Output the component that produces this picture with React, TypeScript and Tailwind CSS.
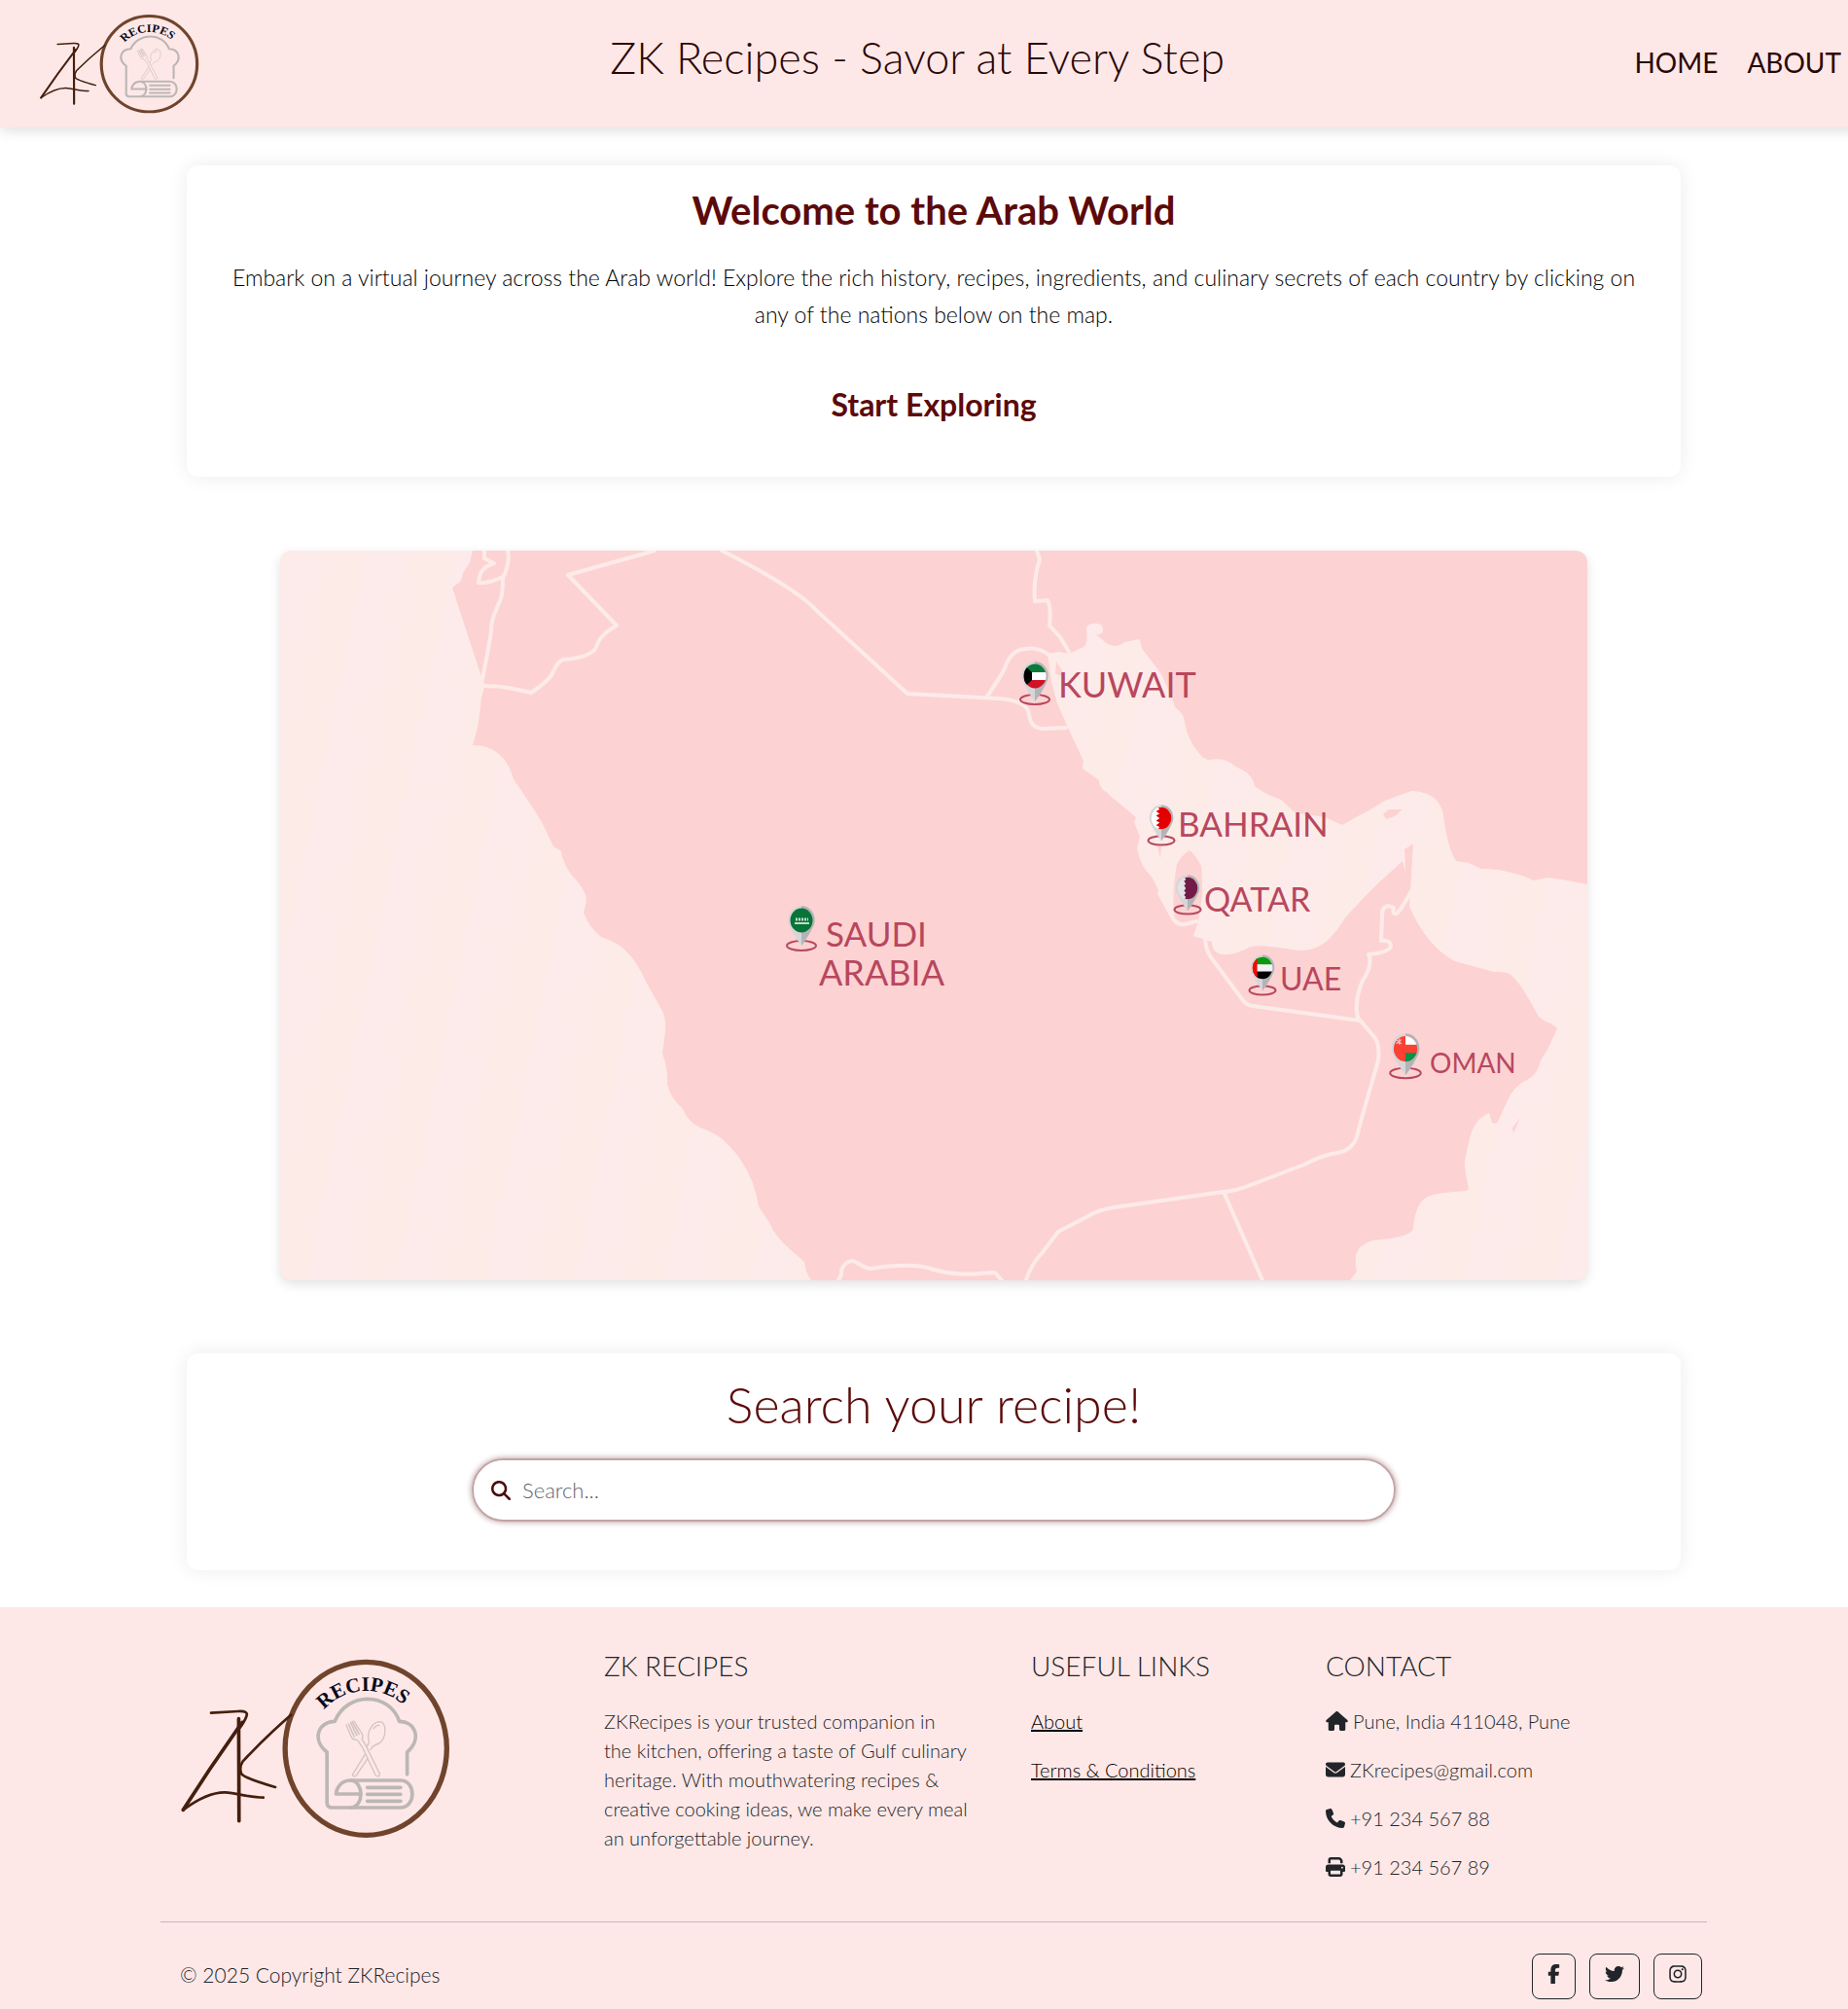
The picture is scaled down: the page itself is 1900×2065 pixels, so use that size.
import React from "react";
import {
  FaEnvelope,
  FaFacebookF,
  FaHouse,
  FaInstagram,
  FaMagnifyingGlass,
  FaPhone,
  FaPrint,
  FaTwitter,
} from "react-icons/fa6";

function Logo({ className, id }: { className: string; id: string }) {
  return (
    <svg
      viewBox="100 65 845 570"
      preserveAspectRatio="none"
      className={className}
      role="img"
      aria-label="ZK Recipes logo"
      fill="none"
      strokeLinecap="round"
      strokeLinejoin="round"
    >
      <ellipse cx="679" cy="351" rx="249" ry="267" stroke="#70442c" strokeWidth="16" />
      <g stroke="#451f0e">
        <path d="M202 241 L285 236 Q318 234 311 251 Q306 266 290 288" strokeWidth="8" />
        <path d="M298 270 Q205 400 116 540" strokeWidth="11" />
        <path d="M116 540 Q190 485 245 486 C285 489 320 502 363 502" strokeWidth="8" />
        <path d="M287 259 L288 574" strokeWidth="11" />
        <path d="M448 247 Q370 315 300 390 Q287 410 296 430 Q310 444 400 470" strokeWidth="8" />
      </g>
      <path id={id} d="M507 346 A173 173 0 0 1 853 346" />
      <text fill="#0a0a1e" fontFamily="'Liberation Serif', serif" fontWeight="700" fontSize="63" textAnchor="middle">
        <textPath href={`#${id}`} startOffset="48%">
          RECIPES
        </textPath>
      </text>
      <g stroke="#bdb7b4" strokeWidth="11">
        <path d="M806 430 V362 C850 325 835 268 782 267 C750 175 620 175 583 267 C530 268 512 325 559 362 V518 Q559 533 576 533 H785 C834 533 834 449 785 449 H630 C600 450 588 475 587 491 H660" />
        <path d="M634 449 C673 455 673 528 634 533" />
        <path d="M683 471 H786 M683 492 H786 M683 513 H786" />
      </g>
      <g stroke="#d3c5bd" strokeWidth="4">
        <path d="M618 278 L634 315 Q640 326 652 324 L667 345 L709 434 Q720 440 722 430 L679 342 L667 322 Q672 312 665 302 L642 266" />
        <path d="M625 275 L643 314 M632 271 L651 310 M637 268 L658 306" strokeWidth="5" />
        <path d="M676 370 L637 432 Q642 440 650 433 L684 382" />
        <path d="M693 354 Q702 340 720 335 C745 315 742 270 722 268 C700 268 680 300 688 325 Q690 335 682 344" />
        <path d="M702 290 Q710 278 720 279" />
      </g>
    </svg>
  );
}

type Country = "saudi" | "kuwait" | "bahrain" | "qatar" | "uae" | "oman";

function Flag({ country }: { country: Country }) {
  switch (country) {
    case "kuwait":
      return (
        <>
          <rect x="-14" y="-14" width="28" height="10" fill="#0b7a3c" />
          <rect x="-14" y="-4" width="28" height="8" fill="#fff" />
          <rect x="-14" y="4" width="28" height="10" fill="#d01226" />
          <path d="M-14 -14 L-3 -4 V4 L-14 14Z" fill="#000" />
        </>
      );
    case "bahrain":
      return (
        <>
          <rect x="-14" y="-14" width="28" height="28" fill="#fff" />
          <path d="M14 -14 H-5 L-2 -10 L-6 -8 L-2 -5 L-6 -3 L-2 0 L-6 3 L-2 5 L-6 8 L-2 10 L-5 14 H14Z" fill="#e30000" />
        </>
      );
    case "qatar":
      return (
        <>
          <rect x="-14" y="-14" width="28" height="28" fill="#e4e2e6" />
          <path d="M14 -14 H-4 L-2 -10 L-4 -8 L-2 -5 L-4 -3 L-2 0 L-4 3 L-2 5 L-4 8 L-2 10 L-4 14 H14Z" fill="#731b48" />
        </>
      );
    case "uae":
      return (
        <>
          <rect x="-14" y="-14" width="28" height="10" fill="#089a08" />
          <rect x="-14" y="-4" width="28" height="8" fill="#f2f2f2" />
          <rect x="-14" y="4" width="28" height="10" fill="#000" />
          <rect x="-14" y="-14" width="8" height="28" fill="#fa0606" />
        </>
      );
    case "oman":
      return (
        <>
          <rect x="-14" y="-14" width="28" height="28" fill="#fb4034" />
          <rect x="0" y="-14" width="14" height="10" fill="#fff" />
          <rect x="0" y="4" width="14" height="10" fill="#049447" />
          <path d="M-9 -9 L-4 -5 M-4 -9 L-9 -5 M-6 -10 V-4" stroke="#ffc9c2" strokeWidth="1" />
        </>
      );
    default:
      return (
        <>
          <rect x="-14" y="-14" width="28" height="28" fill="#087437" />
          <path d="M-7 3 H8" stroke="#fff" strokeWidth="1.5" />
          <path d="M-6 -1 H7" stroke="#c5e0cf" strokeWidth="3" strokeDasharray="2 1" />
        </>
      );
  }
}

interface Pin {
  country: Country;
  x: number;
  y: number;
  tip: number;
  scale: number;
  labels: { text: string; x: number; y: number; size: number }[];
}

const pins: Pin[] = [
  { country: "kuwait", x: 776, y: 129, tip: 153, scale: 1, labels: [{ text: "KUWAIT", x: 800, y: 151, size: 36 }] },
  { country: "bahrain", x: 906, y: 275, tip: 298, scale: 0.9, labels: [{ text: "BAHRAIN", x: 923, y: 294, size: 35 }] },
  { country: "qatar", x: 933, y: 347, tip: 369, scale: 0.9, labels: [{ text: "QATAR", x: 950, y: 371, size: 34 }] },
  { country: "uae", x: 1010, y: 429, tip: 452, scale: 0.9, labels: [{ text: "UAE", x: 1028, y: 452, size: 32 }] },
  { country: "oman", x: 1157, y: 512, tip: 537, scale: 1.05, labels: [{ text: "OMAN", x: 1182, y: 537, size: 28 }] },
  {
    country: "saudi",
    x: 536,
    y: 380,
    tip: 406,
    scale: 1,
    labels: [
      { text: "SAUDI", x: 561, y: 407, size: 35 },
      { text: "ARABIA", x: 554, y: 447, size: 36 },
    ],
  },
];

function GulfMap() {
  return (
    <svg viewBox="0 0 1344 750" className="block h-auto w-full" role="group" aria-label="Map of the Arab world">
      <defs>
        <linearGradient id="sea" gradientUnits="userSpaceOnUse" x1="0" y1="0" x2="88" y2="18" spreadMethod="repeat">
          <stop offset="0" stopColor="#fdebeb" />
          <stop offset="0.45" stopColor="#fdebea" />
          <stop offset="0.6" stopColor="#fdebe7" />
          <stop offset="0.95" stopColor="#fdebe8" />
          <stop offset="1" stopColor="#fdebeb" />
        </linearGradient>
        <clipPath id="bulb">
          <ellipse rx="11.5" ry="12.5" />
        </clipPath>
      </defs>
      <rect width="1344" height="750" fill="#fcd3d2" />
      <g fill="url(#sea)">
        <path d="M198 0 L195 12 L188 23 L186 31 L177 38 L206 127 L211 139 Q207 146 206 160 Q204 182 198 200 Q216 199 229 213 Q236 221 240 235 Q256 258 269 279 L281 304 L289 309 Q290 320 300 334 Q318 352 314 364 L312 372 Q318 388 330 397 Q350 404 358 414 Q367 423 376 443 L394 475 Q397 484 396 494 L393 517 Q399 533 398 548 Q401 562 414 574 Q420 588 432 593 Q449 599 458 608 Q486 635 492 674 L503 691 Q508 704 524 718 L539 731 Q540 742 546 750 H0 V0Z" />
        <path d="M789 106 L801 104 L811 106 L826 99 Q831 96 829 81 Q829 76 835 75 Q846 73 846 82 Q845 87 839 86 L848 94 Q859 102 868 94 L884 91 Q884 100 891 107 L906 127 L917 151 L920 161 Q930 168 930 177 Q934 196 944 207 Q949 215 956 215 Q972 212 982 222 Q999 228 1002 242 Q1012 250 1029 256 L1043 269 L1074 274 L1092 282 L1106 274 L1118 268 L1136 257 L1163 247 Q1192 248 1196 272 Q1200 305 1209 319 L1222 321 L1235 327 Q1252 327 1266 331 Q1280 334 1288 339 L1304 336 Q1325 339 1344 343 V750 H1100 L1107 741 Q1105 731 1106 724 Q1109 713 1124 709 Q1164 706 1165 696 Q1168 666 1183 663 Q1190 660 1220 658 L1222 655 Q1218 640 1218 627 L1223 604 Q1228 584 1243 578 L1246 588 Q1250 590 1252 587 L1262 565 Q1268 552 1278 546 Q1293 540 1296 524 L1304 511 L1313 491 Q1310 487 1301 484 L1294 479 Q1270 434 1261 434 Q1252 432 1248 433 L1208 422 Q1180 408 1161 366 L1163 334 L1165 301 L1156 307 L1157 330 L1154 319 L1132 339 L1114 357 L1096 376 Q1087 390 1083 394 Q1070 411 1048 411 C1025 408 1005 404 996 408 Q978 417 969 415 Q958 414 958 402 L939 396 L944 381 L948 354 Q948 332 947 324 Q940 311 935 308 Q928 312 922 322 Q917 350 919 372 L920 382 L904 352 Q899 339 895 334 Q885 325 881 306 L884 294 L878 279 L880 274 L862 259 Q850 250 851 249 Q842 245 842 236 Q831 228 825 224 L826 216 L810 182 L799 157 L793 134Z" />
      </g>
      <g fill="#fcd3d2">
        <path d="M798 114 L805 125 L802 129 L797 126Z" />
        <path d="M1134 271 L1140 266 L1154 266 L1146 273 L1137 276Z" />
        <path d="M902 303 L906 304 L905 317Z" />
        <path d="M1275 583 L1268 599 L1267 593Z" />
      </g>
      <g fill="none" stroke="#fdebe9" strokeWidth="4" strokeLinejoin="round" strokeLinecap="round">
        <path d="M234 0 Q237 12 229 28 Q229 46 226 52 Q216 72 217 83 Q215 97 208 132" />
        <path d="M210 0 L210 8 L220 13 C206 17 205 25 204 33 Q213 34 229 27" />
        <path d="M211 139 Q230 139 258 146 Q276 134 280 126 Q285 114 291 112 Q320 110 325 99 Q328 87 346 77 L296 25 L385 0" />
        <path d="M454 0 Q530 38 552 62 L645 147 L739 152 Q768 154 770 168 Q771 182 784 183 L808 182" />
        <path d="M726 151 Q740 131 745 121 Q751 102 766 101 Q780 99 790 107" />
        <path d="M778 0 L781 9 Q774 30 776 52 L789 51 Q793 58 791 77 L802 89 L811 104" />
        <path d="M904 352 L918 378 Q922 385 930 384 L942 381" />
        <path d="M951 400 Q952 413 960 422 L989 461 Q994 468 1000 468 L1110 483" />
        <path d="M1163 350 Q1154 367 1148 373 Q1143 374 1145 367 L1139 365 Q1132 367 1133 376 L1132 401 Q1141 400 1142 406 Q1141 413 1119 415 Q1124 425 1113 442 Q1104 462 1108 480 L1125 500 Q1131 507 1129 524 L1109 594 Q1106 616 1087 619 Q1072 621 1053 631 L1003 650 Q985 658 970 659 L858 675 Q842 677 829 685 L800 700 L784 721 Q771 735 767 750" />
        <path d="M970 659 L1010 750" />
        <path d="M574 750 Q578 744 577 740 Q580 731 588 730 C594 730 598 738 608 738 Q650 731 672 739 C700 747 720 742 735 742 L742 750" />
      </g>
      {pins.map((p) => (
        <a key={p.country} href={`#${p.country}`} aria-label={p.labels.map((l) => l.text).join(" ")}>
          <ellipse cx={p.x} cy={p.tip} rx={15 * p.scale} ry={5 * p.scale} fill="none" stroke="#b8475e" strokeWidth="2" />
          <g transform={`translate(${p.x} ${p.y}) scale(${p.scale})`}>
            <path d="M0 -15 A13.5 14.5 0 0 1 13 4 Q9 14 0 26 Q-9 14 -13 4 A13.5 14.5 0 0 1 0 -15Z" fill="#d6d6d8" />
            <path d="M0 -15 A13.5 14.5 0 0 1 13 4 Q9 14 0 26Z" fill="#b4b4b7" />
            <g clipPath="url(#bulb)">
              <Flag country={p.country} />
            </g>
          </g>
          {p.labels.map((l) => (
            <text key={l.text} x={l.x} y={l.y} fontSize={l.size} fontFamily="Lato, sans-serif" fontWeight="400" fill="#b8475e">
              {l.text}
            </text>
          ))}
        </a>
      ))}
    </svg>
  );
}

const contacts = [
  { icon: <FaHouse className="h-5 w-[23px]" />, text: "Pune, India 411048, Pune" },
  { icon: <FaEnvelope className="size-5" />, text: "ZKrecipes@gmail.com" },
  { icon: <FaPhone className="size-5" />, text: "+91 234 567 88" },
  { icon: <FaPrint className="size-5" />, text: "+91 234 567 89" },
];

const socials = [
  { label: "Facebook", icon: <FaFacebookF className="h-5 w-[13px]" /> },
  { label: "Twitter", icon: <FaTwitter className="size-5" /> },
  { label: "Instagram", icon: <FaInstagram className="h-5 w-[18px]" /> },
];

const cardClass = "mx-auto w-4/5 rounded-xl bg-white px-5 text-center shadow-[0_0_20px_rgba(0,0,0,0.08)]";
const footerHeadingClass = "mb-8 text-[28px] leading-5";

export default function App() {
  return (
    <div className="overflow-hidden bg-white font-['Papyrus','Lato',sans-serif] text-[#212529]">
      <div className="w-[calc(100%+20px)]">
        <header className="flex h-[131px] items-center justify-between bg-[#fde8e7] pr-[27px] pl-[39px] shadow-[0_4px_12px_rgba(0,0,0,0.12)]">
          <Logo className="h-[105px] w-[167px]" id="badge-arc-top" />
          <p className="pb-3 text-[45px] leading-none font-light text-[#2b0606]">ZK Recipes - Savor at Every Step</p>
          <nav className="flex gap-[30px] pb-1 text-[28px] leading-8 text-[#2b0606]">
            <a href="#home">HOME</a>
            <a href="#about">ABOUT</a>
          </nav>
        </header>

        <main className="pt-[39px] pb-[38px]">
          <section className={cardClass}>
            <div className="px-3 pt-4 pb-[52px]">
              <h1 className="text-[40px] leading-[60px] font-bold text-[#5c0a0a]">Welcome to the Arab World</h1>
              <p className="mt-5 text-[23px] leading-[38px] font-light text-black">
                Embark on a virtual journey across the Arab world! Explore the rich history, recipes, ingredients, and
                culinary secrets of each country by clicking on any of the nations below on the map.
              </p>
              <h2 className="mt-[54px] mb-0.5 text-[32px] leading-10 font-bold text-[#5c0a0a]">Start Exploring</h2>
            </div>
          </section>

          <section className="mx-auto mt-[76px] mb-[75px] w-[70%] overflow-hidden rounded-xl shadow-[0_4px_12px_rgba(0,0,0,0.12)]">
            <GulfMap />
          </section>

          <section className={cardClass}>
            <div className="flex flex-col items-center pt-4 pb-[50px]">
              <h2 className="text-[52px] leading-[72px] font-light text-[#5c0a0a]">Search your recipe!</h2>
              <div className="mt-5 flex h-[65px] w-full max-w-[950px] items-center gap-3 rounded-full border-2 border-[#c3a4a5] px-[18px] shadow-[0_0_6px_rgba(92,10,10,0.45)]">
                <FaMagnifyingGlass className="size-5 text-[#4a0d0d]" />
                <input
                  type="text"
                  aria-label="Search your recipe"
                  placeholder="Search..."
                  className="h-10 min-w-0 flex-1 bg-transparent text-[22px] font-light outline-none placeholder:text-[#5f656b]"
                />
              </div>
            </div>
          </section>
        </main>

        <footer className="bg-[#fde8e7] pb-[30px]">
          <div className="mx-auto w-[1590px] max-w-full">
            <div className="grid grid-cols-[436fr_439fr_303fr_372fr] px-5 pt-[50px] text-xl leading-[30px] font-light">
              <Logo className="-ml-0.5 h-[190px] w-[282px]" id="badge-arc-bottom" />
              <section>
                <h3 className={footerHeadingClass}>ZK RECIPES</h3>
                <p className="pr-[52px]">
                  ZKRecipes is your trusted companion in
                  <br />
                  the kitchen, offering a taste of Gulf culinary heritage. With mouthwatering recipes &amp; creative
                  cooking ideas, we make every meal an unforgettable journey.
                </p>
              </section>
              <section>
                <h3 className={footerHeadingClass}>USEFUL LINKS</h3>
                <ul className="space-y-5 text-black underline decoration-2">
                  <li>
                    <a href="#about">About</a>
                  </li>
                  <li>
                    <a href="#terms">Terms &amp; Conditions</a>
                  </li>
                </ul>
              </section>
              <section>
                <h3 className={footerHeadingClass}>CONTACT</h3>
                <ul className="space-y-5">
                  {contacts.map((c) => (
                    <li key={c.text} className="flex items-center gap-[5px]">
                      {c.icon}
                      {c.text}
                    </li>
                  ))}
                </ul>
              </section>
            </div>
            <hr className="mt-[41px] border-[#c9b6b7]" />
            <div className="flex items-center justify-between pt-8 pr-[5px] pl-5">
              <p className="pb-1 text-[21px] font-light">© 2025 Copyright ZKRecipes</p>
              <div className="flex gap-[14px]">
                {socials.map((s) => (
                  <a
                    key={s.label}
                    href="#social"
                    aria-label={s.label}
                    className="flex h-[47px] items-center rounded-lg border border-[#212529] px-[15px] pb-1.5"
                  >
                    {s.icon}
                  </a>
                ))}
              </div>
            </div>
          </div>
        </footer>
      </div>
    </div>
  );
}
